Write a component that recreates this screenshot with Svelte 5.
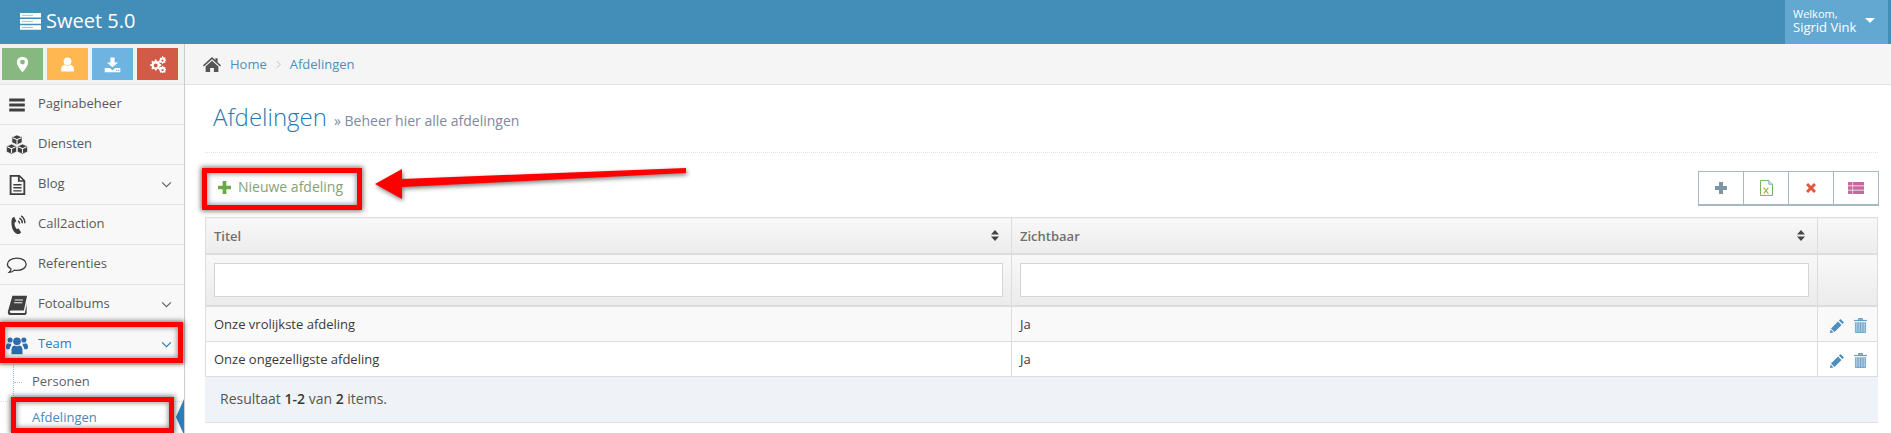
<script>
	const nav = [
		{ label: 'Paginabeheer', icon: 'bars' },
		{ label: 'Diensten', icon: 'cubes' },
		{ label: 'Blog', icon: 'doc', more: true },
		{ label: 'Call2action', icon: 'phone' },
		{ label: 'Referenties', icon: 'chat' },
		{ label: 'Fotoalbums', icon: 'book', more: true },
		{ label: 'Team', icon: 'users', more: true, active: true }
	];
	const rows = ['Onze vrolijkste afdeling', 'Onze ongezelligste afdeling'];
</script>

{#snippet icon(name)}
	<svg class="ico" viewBox="0 0 24 24" fill="currentColor" aria-hidden="true">
		{#if name === 'bars'}
			<path d="M3.500 5h17v3.200h-17zM3.500 10.400h17v3.200h-17zM3.500 15.800h17V19h-17z" />
		{:else if name === 'cubes'}
			<path d="M12 1l5.500 2.400v6L12 11.800 6.500 9.400v-6zM6 11l5.500 2.400v6L6 22 .5 19.400v-6zM18 11l5.500 2.400v6L18 22l-5.500-2.600v-6z" stroke="#f8f8f8" stroke-width=".7" />
			<path d="M7.500 4.200L12 6.200l4.500-2M1.500 14L6 16l4.500-2M13.500 14l4.500 2 4.500-2M6 16v5M18 16v5M12 6.200v4.600" fill="none" stroke="#f8f8f8" stroke-width="1.200" />
		{:else if name === 'doc'}
			<path d="M4 1h11l6 6v16H4zM6 3v18h13V8.500h-6V3zM15 3.500v3.200h3.200zM8 11h9v1.600H8zM8 14.300h9v1.600H8zM8 17.600h9v1.600H8z" fill-rule="evenodd" />
		{:else if name === 'phone'}
			<path d="M6.500 4.500L9 3l2.200 5-1.800 1.500c-.4 1.800.3 4.500 2.100 6.800l2.300-.6 2.700 4.600-2.200 1.400c-3 1-6.200-2.200-7.700-7-1-3.800-.8-8 0-9.700z" />
			<path d="M13 7.500a3 3 0 0 1 1.800 3M14.500 4.500a6 6 0 0 1 3.300 5.500M16.500 2a9 9 0 0 1 4 8" fill="none" stroke="currentColor" stroke-width="1.500" />
		{:else if name === 'chat'}
			<path d="M12 4.500c5.800 0 10 2.900 10 6.700s-4.200 6.700-10 6.700c-1 0-2 0-3-.3-1.300 1.300-3.300 2.300-5.400 2.400 1-.9 1.700-2.200 1.800-3.900-2.600-1.200-3.900-3-3.900-4.900 0-3.800 4.700-6.700 10.500-6.700z" fill="none" stroke="currentColor" stroke-width="1.400" />
		{:else if name === 'book'}
			<path d="M7 2h16l-3.500 16H5.500c-1.200 0-1.500 1-1.300 1.700.2.600.8 1 1.600 1h14.700L22.500 11v10.500L21 23H5c-2 0-3.300-1.600-3-3.700z" />
			<path d="M9.500 6.500h9M8.800 9.500h9" stroke="#f8f8f8" stroke-width="1.200" />
		{:else if name === 'users'}
			<circle cx="12" cy="8" r="4.200" /><circle cx="4.500" cy="6.500" r="2.800" /><circle cx="19.500" cy="6.500" r="2.800" />
			<path d="M6 22v-5c0-3 2-4.500 3.500-4.500 1.500 1 3.500 1 5 0 1.500 0 3.500 1.500 3.500 4.500v5zM0 14c0-3 1.500-4 2.500-4 1 .8 2.500.9 3.500.6-.5 1-.5 1.600-.3 2.400-1 .7-1.700 1.800-1.700 3.500H1.500C.5 16.500 0 15.500 0 14zM24 14c0-3-1.500-4-2.500-4-1 .8-2.500.9-3.500.6.5 1 .5 1.600.3 2.400 1 .7 1.700 1.800 1.700 3.500h2.500c1 0 1.500-1 1.500-2.500z" />
		{:else if name === 'pin'}
			<path d="M12 1a8 8 0 0 0-8 8c0 5 8 14 8 14s8-9 8-14a8 8 0 0 0-8-8zm0 11a3.400 3.400 0 1 1 0-6.800 3.400 3.400 0 0 1 0 6.800z" fill-rule="evenodd" />
		{:else if name === 'user'}
			<circle cx="12" cy="7.500" r="5.500" /><path d="M3 22v-3.500c0-3.500 2.500-5.500 5-6 2.400 1.700 5.600 1.700 8 0 2.500.5 5 2.500 5 6V22z" />
		{:else if name === 'download'}
			<path d="M9 2h6v7h5l-8 7-8-7h5zM1 17h7l4 3 4-3h7v6H1zM17 19.500h1.500V21H17zM20 19.500h1.500V21H20z" fill-rule="evenodd" />
		{:else if name === 'cogs'}
			<path d="M8.500 5h2l.5 2 1.500.6 1.800-1 1.400 1.400-1 1.800.6 1.500 2 .5v2l-2 .5-.6 1.500 1 1.800-1.400 1.400-1.800-1-1.500.6-.5 2h-2l-.5-2-1.500-.6-1.800 1-1.400-1.400 1-1.800-.6-1.500-2-.5v-2l2-.5.6-1.500-1-1.800 1.400-1.400 1.800 1L8 7zM9.500 10.500a2.800 2.800 0 1 0 0 5.600 2.800 2.800 0 0 0 0-5.600z" fill-rule="evenodd" />
			<path d="M18.500 .5h1.400l.3 1.300 1.100.5 1.100-.7 1 1-.7 1.100.5 1.100 1.300.3v1.400l-1.300.3-.5 1.100.7 1.100-1 1-1.100-.7-1.100.5-.3 1.300h-1.400l-.3-1.300-1.100-.5-1.100.7-1-1 .7-1.100-.5-1.100-1.300-.3V5.700l1.300-.3.5-1.100-.7-1.100 1-1 1.100.7 1.100-.5zM19.200 4.800a1.600 1.600 0 1 0 0 3.200 1.600 1.600 0 0 0 0-3.200z" fill-rule="evenodd" />
			<path d="M18.500 14h1.400l.3 1.300 1.100.5 1.100-.7 1 1-.7 1.100.5 1.100 1.300.3v1.400l-1.300.3-.5 1.100.7 1.100-1 1-1.100-.7-1.100.5-.3 1.300h-1.400l-.3-1.300-1.100-.5-1.100.7-1-1 .7-1.100-.5-1.100-1.300-.3v-1.400l1.300-.3.5-1.100-.7-1.100 1-1 1.100.7 1.100-.5zM19.200 18.300a1.600 1.600 0 1 0 0 3.200 1.600 1.600 0 0 0 0-3.200z" fill-rule="evenodd" />
		{/if}
	</svg>
{/snippet}

{#snippet sort()}
	<svg class="sort" viewBox="0 0 8 11" aria-hidden="true"><path d="M4 0l4 4.500H0zM4 11L0 6.500h8z" /></svg>
{/snippet}

<div class="app">
	<header class="topbar">
		<div class="brand">
			<svg class="logo" viewBox="0 0 21 17" aria-hidden="true">
				<path d="M0 0h21v4.600H0zM0 6.100h21v4.600H0zM0 12.200h21v4.600H0z" fill="#fff" />
				<path d="M2 2.300h11M2 8.400h11M2 14.500h11" stroke="#9cc4db" stroke-width="1" />
			</svg>
			<span>Sweet 5.0</span>
		</div>
		<button class="user">
			<span class="who"><small>Welkom,</small><span>Sigrid Vink</span></span>
			<i class="caret"></i>
		</button>
	</header>

	<div class="body">
		<aside class="sidebar">
			<div class="shortcuts">
				<span class="sc green">{@render icon('pin')}</span>
				<span class="sc orange">{@render icon('user')}</span>
				<span class="sc blue">{@render icon('download')}</span>
				<span class="sc red">{@render icon('cogs')}</span>
			</div>
			<ul class="nav">
				{#each nav as item}
					<li class:active={item.active}>
						<span class="nav-ico">{@render icon(item.icon)}</span>
						<span class="nav-label">{item.label}</span>
						{#if item.more}
							<svg class="chev" viewBox="0 0 12 8" aria-hidden="true"><path d="M1 1.500l5 5 5-5" /></svg>
						{/if}
					</li>
				{/each}
			</ul>
			<ul class="sub">
				<li><i class="dash"></i>Personen</li>
				<li class="current">Afdelingen<i class="pointer"></i></li>
			</ul>
		</aside>

		<main class="main">
			<nav class="crumbs">
				<svg class="home" viewBox="0 0 24 20" aria-hidden="true">
					<path d="M12 0l4.500 4V1.500h3V7l4.500 4-1.300 1.500L12 3 1.300 12.500 0 11zM12 5l8.500 7.500V20H14.500v-5.500h-5V20H3.500v-7.500z" />
				</svg>
				<a href="#home">Home</a>
				<svg class="crumb-sep" viewBox="0 0 6 10" aria-hidden="true"><path d="M1 1l4 4-4 4" /></svg>
				<a href="#afdelingen">Afdelingen</a>
			</nav>

			<div class="content">
				<div class="page-head">
					<h1>Afdelingen</h1>
					<span class="subtitle"><b>»</b> Beheer hier alle afdelingen</span>
				</div>

				<div class="toolbar">
					<a class="new" href="#nieuw">
						<svg viewBox="0 0 14 14" aria-hidden="true"><path d="M5 0h4v5h5v4H9v5H5V9H0V5h5z" /></svg>
						Nieuwe afdeling
					</a>
					<div class="tools">
						<span><svg class="t-plus" viewBox="0 0 12 12" aria-hidden="true"><path d="M4 0h4v4h4v4H8v4H4V8H0V4h4z" fill="#7f95a5" /></svg></span>
						<span>
							<svg class="t-xls" viewBox="0 0 14 17" aria-hidden="true">
								<path d="M.5.5h9l4 4v12H.5z" fill="#fff" stroke="#69aa46" />
								<path d="M9.500.5v4h4" fill="#d5e8c8" stroke="#6fb3e0" />
								<path d="M4 8l5 6.500M9 8l-5 6.500" stroke="#a0b03e" stroke-width="1.200" />
							</svg>
						</span>
						<span><svg class="t-x" viewBox="0 0 12 12" aria-hidden="true"><path d="M0 2.500L2.500 0 6 3.500 9.500 0 12 2.500 8.500 6 12 9.500 9.500 12 6 8.500 2.500 12 0 9.500 3.500 6z" fill="#e2563f" /></svg></span>
						<span><svg class="t-list" viewBox="0 0 16 12" aria-hidden="true"><path d="M0 0h16v3.400H0zM0 4.300h16v3.400H0zM0 8.600h16V12H0z" fill="#c6699f" /><path d="M4.700 0v12" stroke="#fff" stroke-width=".6" /></svg></span>
					</div>
				</div>

				<table class="grid">
					<colgroup><col class="c1" /><col class="c2" /><col class="c3" /></colgroup>
					<thead>
						<tr class="heads">
							<th><div class="th">Titel{@render sort()}</div></th>
							<th><div class="th">Zichtbaar{@render sort()}</div></th>
							<th></th>
						</tr>
						<tr class="filters">
							<td><input type="text" aria-label="Titel" /></td>
							<td><input type="text" aria-label="Zichtbaar" /></td>
							<td></td>
						</tr>
					</thead>
					<tbody>
						{#each rows as row, i}
							<tr class:odd={i === 0}>
								<td>{row}</td>
								<td>Ja</td>
								<td class="actions">
									<svg class="a-edit" viewBox="0 0 14 14" aria-hidden="true"><path d="M10.500 0l3.500 3.500-1.600 1.600-3.500-3.500zM8 2.500L11.500 6l-7 7-3.500-3.500zM.6 10.500l2.900 2.900L0 14z" fill="#4c8fbd" /></svg>
									<svg class="a-del" viewBox="0 0 14 16" aria-hidden="true">
										<path d="M5 .5h4V2H5z" fill="none" stroke="#4c8fbd" />
										<path d="M0 2h14v1H0z" fill="#4c8fbd" />
										<path d="M1.500 4h11v12h-11z" fill="#a9c7df" />
										<path d="M1.500 4.500v11h11v-11M4.300 5v10M7 5v10M9.700 5v10" fill="none" stroke="#5f9ac6" stroke-width=".8" />
									</svg>
								</td>
							</tr>
						{/each}
					</tbody>
				</table>
				<div class="summary">Resultaat <b>1-2</b> van <b>2</b> items.</div>
			</div>
		</main>
	</div>

	<!-- annotations drawn over the screenshot -->
	<i class="mark mark-new"></i>
	<i class="mark mark-team"></i>
	<i class="mark mark-sub"></i>
	<svg class="arrow" viewBox="0 0 312 40" aria-hidden="true">
		<path d="M0 20L27 5l0 10 284-11 0 5-284 14 0 12z" fill="#f00" />
	</svg>
</div>

<style>
	:global(body) {
		margin: 0;
		background: #fff;
	}
	.app {
		position: relative;
		height: 433px;
		overflow: hidden;
		font-family: "Open Sans", "Liberation Sans", sans-serif;
		font-size: 13px;
		color: #393939;
	}
	.ico {
		display: block;
		width: 100%;
		height: 100%;
	}

	.topbar {
		display: flex;
		justify-content: space-between;
		height: 44px;
		padding-right: 3px;
		box-sizing: border-box;
		background: #438eb9;
		color: #fff;
	}
	.brand {
		display: flex;
		align-items: center;
		gap: 5px;
		padding: 0 0 2px 20px;
		font-size: 20px;
		line-height: 40px;
	}
	.logo {
		width: 21px;
		height: 17px;
	}
	.user {
		display: flex;
		align-items: center;
		width: 103px;
		padding: 0 0 0 8px;
		border: 0;
		background: #62a8d1;
		color: #fff;
		font: inherit;
		text-align: left;
	}
	.who {
		display: flex;
		flex-direction: column;
		flex: 1;
		margin-bottom: 3px;
		line-height: 14px;
	}
	.who small {
		font-size: 11px;
		line-height: 13px;
	}
	.caret {
		width: 0;
		height: 0;
		margin: 0 13px 3px 0;
		border: 5px solid transparent;
		border-top-color: #fff;
		border-bottom: 0;
	}

	.body {
		display: flex;
		height: 389px;
	}
	.sidebar {
		flex: 0 0 184px;
		border-right: 1px solid #ccc;
		background: #f2f2f2;
	}
	.shortcuts {
		display: flex;
		gap: 4px;
		height: 40px;
		padding: 4px 0 0 2px;
		box-sizing: border-box;
	}
	.sc {
		display: flex;
		align-items: center;
		justify-content: center;
		width: 41px;
		height: 32px;
		color: #fff;
	}
	.sc :global(.ico) {
		width: 17px;
		height: 17px;
	}
	.green { background: #87b87f; }
	.orange { background: #ffb752; }
	.blue { background: #6fb3e0; }
	.red { background: #d15b47; }

	.nav, .sub {
		margin: 0;
		padding: 0;
		list-style: none;
	}
	.nav li {
		display: flex;
		align-items: center;
		height: 40px;
		box-sizing: border-box;
		border-top: 1px solid #e5e5e5;
		background: #f8f8f8;
		color: #585858;
	}
	.nav-ico {
		display: block;
		flex: 0 0 24px;
		height: 22px;
		margin: 0 9px 0 5px;
		color: #3f3f3f;
	}
	.nav-label {
		flex: 1;
		padding-bottom: 3px;
	}
	.chev {
		width: 11px;
		height: 7px;
		margin-right: 12px;
		fill: none;
		stroke: #666;
		stroke-width: 1.4;
	}
	.nav li.active {
		color: #2b7dbc;
	}
	.nav li.active .nav-ico {
		color: #2b6cb0;
	}
	.nav li.active .chev {
		stroke: #2b7dbc;
	}
	.sub {
		position: relative;
		background: #fff;
		border-top: 1px solid #e5e5e5;
	}
	.sub::before {
		content: "";
		position: absolute;
		left: 13px;
		top: 0;
		height: 37px;
		border-left: 1px dotted #9dbdd6;
	}
	.sub li {
		position: relative;
		height: 36px;
		padding-left: 32px;
		line-height: 32px;
		color: #616161;
	}
	.sub li + li {
		border-top: 1px dotted #e4e4e4;
	}
	.sub .current {
		line-height: 30px;
		color: #4b88b7;
	}
	.dash {
		position: absolute;
		left: 14px;
		top: 17px;
		width: 8px;
		border-top: 1px dotted #9dbdd6;
	}
	.pointer {
		position: absolute;
		right: 0;
		top: -3px;
		border: 18px solid transparent;
		border-left: 0;
		border-right: 8px solid #2b7dbc;
	}

	.main {
		flex: 1;
		min-width: 0;
	}
	.crumbs {
		display: flex;
		align-items: center;
		height: 41px;
		box-sizing: border-box;
		padding-left: 18px;
		border-bottom: 1px solid #e5e5e5;
		background: #f5f5f5;
	}
	.crumbs a {
		color: #4c8fbd;
		text-decoration: none;
	}
	.home {
		width: 18px;
		height: 15px;
		margin-right: 9px;
		fill: #555;
	}
	.crumb-sep {
		width: 5px;
		height: 9px;
		margin: 0 9px;
		fill: none;
		stroke: #b2b6bf;
		stroke-width: 1;
	}
	.content {
		padding: 0 13px 0 20px;
	}
	.page-head {
		display: flex;
		align-items: baseline;
		height: 68px;
		box-sizing: border-box;
		padding: 15px 0 0 8px;
		border-bottom: 1px dotted #e2e2e2;
	}
	h1 {
		margin: 0 7px 0 0;
		font-size: 24px;
		font-weight: 300;
		line-height: 34px;
		color: #2679b5;
	}
	.subtitle {
		font-size: 14px;
		color: #8089a0;
	}
	.subtitle b {
		font-weight: 400;
	}

	.toolbar {
		display: flex;
		justify-content: space-between;
		height: 64px;
	}
	.new {
		display: flex;
		align-items: center;
		align-self: flex-start;
		gap: 7px;
		margin: 24px 0 0 13px;
		font-size: 14px;
		line-height: 20px;
		color: #82a37a;
		text-decoration: none;
	}
	.new svg {
		width: 13px;
		height: 13px;
		fill: #69aa46;
	}
	.tools {
		display: flex;
		align-self: flex-start;
		height: 35px;
		margin: 18px -1px 0 0;
		box-sizing: border-box;
		border: 1px solid #a8b8c2;
		border-bottom-width: 2px;
	}
	.tools span {
		display: flex;
		align-items: center;
		justify-content: center;
		width: 44px;
		background: #fff;
	}
	.tools span + span {
		border-left: 1px solid #a8b8c2;
	}
	.t-plus { width: 12px; height: 12px; }
	.t-xls { width: 13px; height: 16px; }
	.t-x { width: 10px; height: 10px; }
	.t-list { width: 16px; height: 12px; }

	.grid {
		width: 100%;
		border-collapse: collapse;
		table-layout: fixed;
	}
	.c2 { width: 806px; }
	.c1 { width: 806px; }
	.grid th, .grid td {
		padding: 0 8px;
		border: 1px solid #ddd;
		text-align: left;
	}
	.heads th {
		height: 35px;
		border-bottom-width: 2px;
		background: linear-gradient(#f8f8f8, #ececec);
		font-weight: 600;
		font-size: 13px;
		color: #707070;
	}
	.th {
		display: flex;
		align-items: center;
		justify-content: space-between;
	}
	.sort {
		width: 8px;
		height: 11px;
		margin-right: 4px;
		fill: #444;
	}
	.filters td {
		height: 50px;
		border-bottom-width: 2px;
		background: linear-gradient(#f8f8f8, #ebebeb);
	}
	.filters input {
		display: block;
		width: 100%;
		height: 34px;
		box-sizing: border-box;
		border: 1px solid #d5d5d5;
		background: #fff;
	}
	tbody td {
		height: 34px;
		background: #fff;
	}
	.odd td {
		background: #f9f9f9;
	}
	.actions {
		white-space: nowrap;
	}
	.actions svg {
		display: inline-block;
		vertical-align: middle;
	}
	.a-edit {
		width: 14px;
		height: 14px;
		margin-left: 4px;
	}
	.a-del {
		width: 13px;
		height: 15px;
		margin-left: 7px;
	}
	.summary {
		height: 46px;
		box-sizing: border-box;
		padding-left: 15px;
		border-bottom: 1px solid #e0e0e0;
		background: #eff3f8;
		font-size: 14px;
		line-height: 44px;
		color: #555;
	}
	.summary b {
		font-weight: 600;
		color: #393939;
	}

	.mark {
		position: absolute;
		box-sizing: border-box;
		border: 5px solid #f00;
		box-shadow: 0 0 5px 1px rgba(0, 0, 0, .55), inset 0 0 5px 1px rgba(0, 0, 0, .4);
	}
	.mark-new { left: 202px; top: 168px; width: 160px; height: 42px; }
	.mark-team { left: 0; top: 322px; width: 183px; height: 41px; }
	.mark-sub { left: 11px; top: 397px; width: 163px; height: 36px; }
	.arrow {
		position: absolute;
		left: 375px;
		top: 164px;
		width: 312px;
		height: 40px;
		filter: drop-shadow(1px 2px 2px rgba(0, 0, 0, .5));
	}
</style>
